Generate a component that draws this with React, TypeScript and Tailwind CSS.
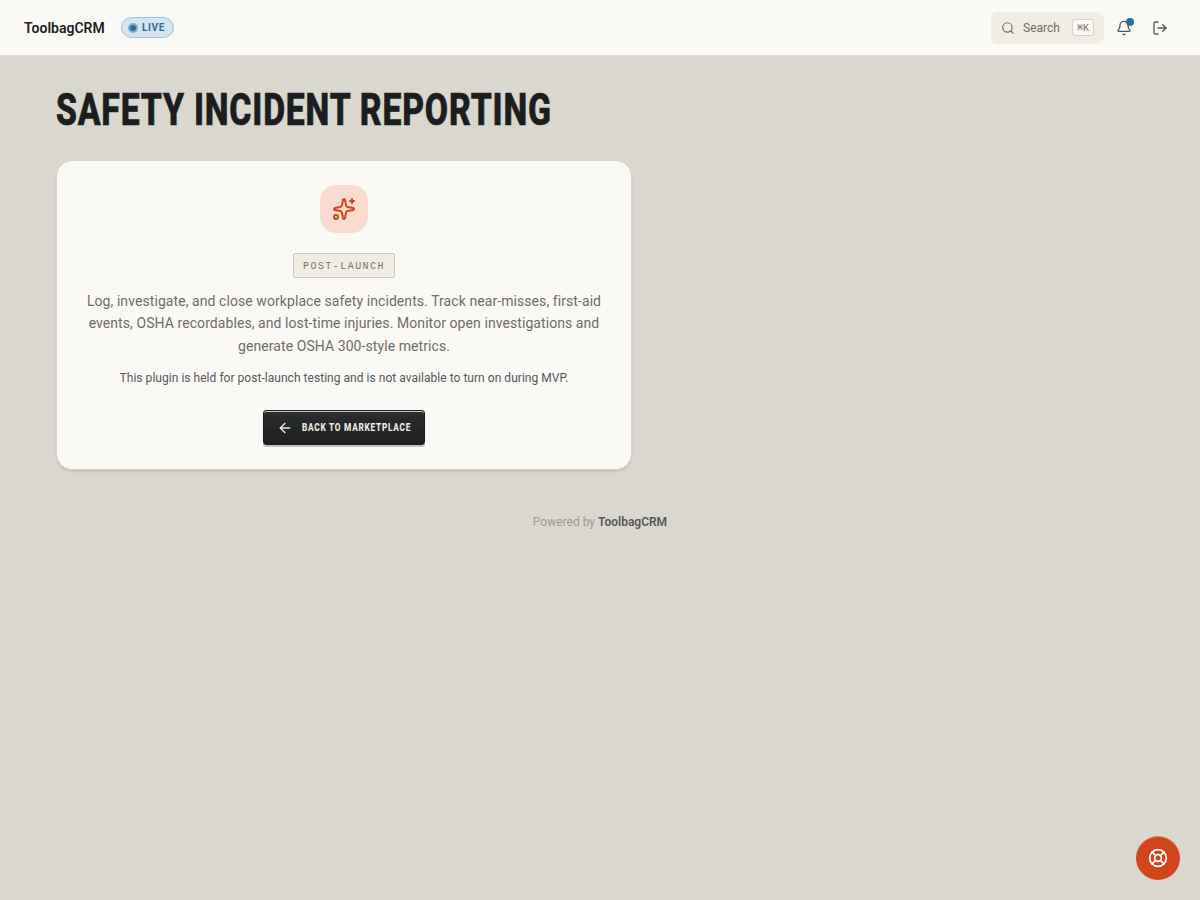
import { ArrowLeft, Bell, LifeBuoy, LogOut, Search } from "lucide-react";

const DESCRIPTION = [
  "Log, investigate, and close workplace safety incidents. Track near-misses, first-aid",
  "events, OSHA recordables, and lost-time injuries. Monitor open investigations and",
  "generate OSHA 300-style metrics.",
];

function SparklesIcon() {
  return (
    <svg
      viewBox="0 0 24 24"
      fill="none"
      stroke="currentColor"
      strokeWidth="2"
      strokeLinecap="round"
      strokeLinejoin="round"
      className="size-6"
    >
      <path d="M11.017 2.814a1 1 0 0 1 1.966 0l1.051 5.558a2 2 0 0 0 1.594 1.594l5.558 1.051a1 1 0 0 1 0 1.966l-5.558 1.051a2 2 0 0 0-1.594 1.594l-1.051 5.558a1 1 0 0 1-1.966 0l-1.051-5.558a2 2 0 0 0-1.594-1.594l-5.558-1.051a1 1 0 0 1 0-1.966l5.558-1.051a2 2 0 0 0 1.594-1.594z" />
      <path d="M20 2v4" />
      <path d="M22 4h-4" />
      <circle cx="4" cy="20" r="2" />
    </svg>
  );
}

function Header() {
  return (
    <header className="flex h-[55px] items-center justify-between bg-[#fbf9f5] px-6">
      <div className="flex items-center">
        <span className="w-[97px] whitespace-nowrap pt-0.5 text-[14px] font-semibold text-[#1b1d1f]">
          ToolbagCRM
        </span>
        <span className="flex h-[21px] w-[53px] items-center rounded-full border border-[#9fc0d6] bg-[#d5e4ee] pl-1.5 text-[10px] font-bold tracking-[0.6px] text-[#2b6f9f]">
          <span className="mr-1 size-2.5 shrink-0 rounded-full border-2 border-[#7fabc9] bg-[#2b6f9f]" />
          LIVE
        </span>
      </div>

      <div className="flex items-center">
        <button className="flex h-8 w-[113px] items-center rounded-md bg-[#f0ede4] pl-2.5 text-[12px] text-[#6d6d69]">
          <Search className="mr-2 size-3.5" strokeWidth={2} />
          <span className="w-[49px] text-left">Search</span>
          <kbd className="flex h-[17px] w-[22px] items-center justify-center rounded-[3px] border border-[#d2d1cb] bg-[#fbf9f5] pt-px font-['Liberation_Mono','DejaVu_Sans_Mono',monospace] text-[10px]">
            ⌘K
          </kbd>
        </button>
        <button className="relative ml-1 flex size-8 items-center justify-center text-[#54575b]">
          <Bell className="size-4" />
          <span className="absolute right-1.5 top-1.5 size-2 rounded-full bg-[#2b6f9f]" />
        </button>
        <button className="ml-1 flex size-8 items-center justify-center text-[#54575b]">
          <LogOut className="size-4" />
        </button>
      </div>
    </header>
  );
}

export default function App() {
  return (
    <div className="min-h-screen bg-[#dad7ce] font-['Roboto',sans-serif]">
      <Header />

      <main className="px-14 pt-[31px]">
        <h1 className="h-[48px] origin-left scale-x-[0.75] whitespace-nowrap text-[45px] font-extrabold leading-[48px] tracking-[1.07px] text-[#1b1d1f] [-webkit-text-stroke:0.7px_#1b1d1f]">
          SAFETY INCIDENT REPORTING
        </h1>

        <section className="mt-[26px] flex h-[310px] w-[576px] flex-col items-center rounded-2xl border border-[#d7d4cb] bg-[#fbf9f5] pt-6 shadow-[0_2px_3px_-1px_rgba(27,29,31,0.18)]">
          <div className="flex size-12 items-center justify-center rounded-2xl bg-[#f9dbd0] text-[#d0451b]">
            <SparklesIcon />
          </div>

          <span className="mt-5 flex h-[25px] w-[102px] items-center justify-center rounded-[2px] border border-[#cac9c0] bg-[#f0ede4] pt-0.5 font-['Liberation_Mono',monospace] text-[10px] tracking-[1.45px] text-[#73736e]">
            POST-LAUNCH
          </span>

          <p className="mt-3 text-center text-[14px] leading-[22.4px] tracking-[0.075px] text-[#6d6d69]">
            {DESCRIPTION.map((line) => (
              <span key={line} className="block whitespace-nowrap">
                {line}
              </span>
            ))}
          </p>

          <p className="mt-[12.8px] whitespace-nowrap text-[12px] leading-4 tracking-[0.035px] text-[#54575b]">
            This plugin is held for post-launch testing and is not available to turn on during MVP.
          </p>

          <button className="mt-6 flex h-[35px] w-[162px] items-center rounded-[3px] border border-[#1b1d1f] bg-linear-to-b from-[#2b2d2f] to-[#1d1f21] pl-[13px] pt-px text-[#f0ede4] shadow-[inset_0_1px_0_#c9c9c7,0_2px_0_#c4c3c0]">
            <ArrowLeft className="mr-[8.5px] size-4 shrink-0" />
            <span className="origin-left scale-x-[0.75] whitespace-nowrap text-[11px] font-extrabold tracking-[1px]">
              BACK TO MARKETPLACE
            </span>
          </button>
        </section>
      </main>

      <footer className="mt-[42px] text-center text-[12px] leading-5 text-[#9d9b94]">
        Powered by <span className="font-semibold text-[#54575b]">ToolbagCRM</span>
      </footer>

      <button className="fixed bottom-5 right-5 flex size-11 items-center justify-center rounded-full bg-[#d0451b] text-white shadow-[inset_0_1px_0_rgba(255,255,255,0.3)]">
        <LifeBuoy className="size-5" />
      </button>
    </div>
  );
}
